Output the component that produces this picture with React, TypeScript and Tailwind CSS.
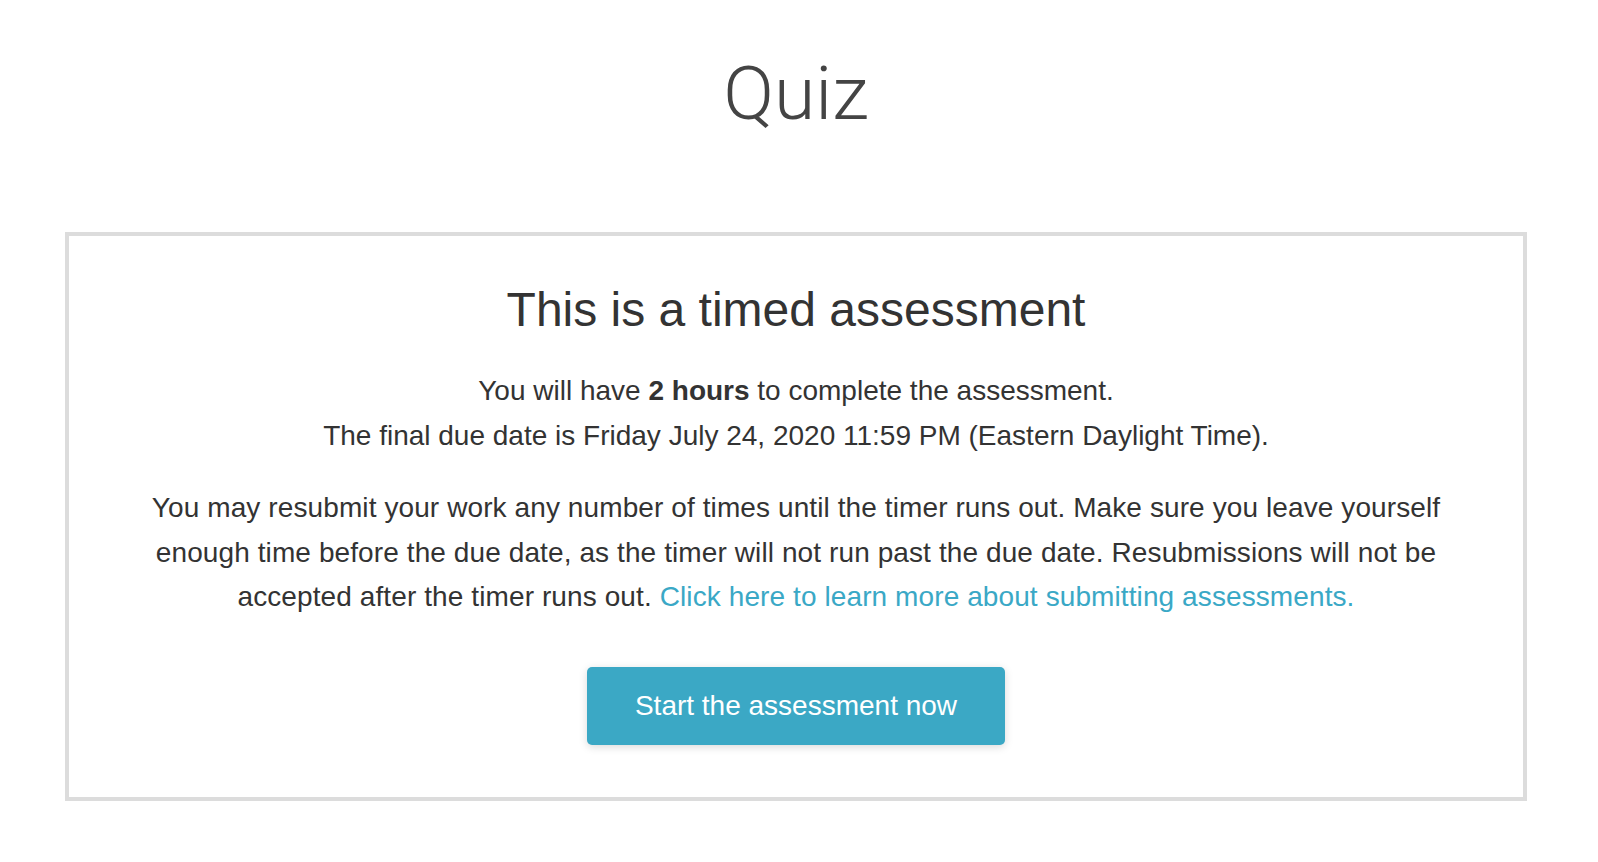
import React from 'react';

const App: React.FC = () => {
  return (
    <div className="min-h-screen bg-white pl-[65px] pr-[71px] font-['Helvetica_Neue','Liberation_Sans',Arial,sans-serif] text-[#333]">
      {/* Page title */}
      <h1 className="pt-[48px] text-center text-[75px] leading-[90px] font-light text-[#444] font-['Helvetica_Neue','Roboto','Liberation_Sans',sans-serif]">
        Quiz
      </h1>

      {/* Timed assessment card */}
      <div className="mt-[94px] border-4 border-[#dcdcdc] px-10 pt-[50px] pb-[52px] text-center">
        <h2 className="text-[48px] leading-[48px] text-[#333]">This is a timed assessment</h2>

        <div className="mt-[34px] text-[28px] leading-[45px]">
          <p>
            You will have <strong className="font-bold">2 hours</strong> to complete the assessment.
          </p>
          <p>The final due date is Friday July 24, 2020 11:59 PM (Eastern Daylight Time).</p>
        </div>

        <p className="mt-[28px] text-[28px] leading-[44.5px] tracking-[0.1px]">
          You may resubmit your work any number of times until the timer runs out. Make sure you leave yourself
          <br />
          enough time before the due date, as the timer will not run past the due date. Resubmissions will not be
          <br />
          accepted after the timer runs out.{' '}
          <a href="#" className="text-[#3aa8c6]">
            Click here to learn more about submitting assessments.
          </a>
        </p>

        <div className="mt-[47px] flex justify-center">
          <button className="h-[78px] w-[418px] rounded-[5px] bg-[#3ba8c5] text-[28px] text-white shadow-[0_2px_8px_rgba(0,0,0,0.15)]">
            Start the assessment now
          </button>
        </div>
      </div>
    </div>
  );
};

export default App;
